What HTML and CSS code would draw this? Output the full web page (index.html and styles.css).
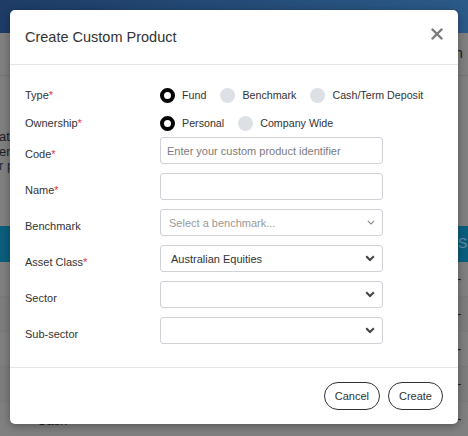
FILE: index.html
```html
<!DOCTYPE html>
<html>
<head>
<meta charset="utf-8">
<link rel="stylesheet" href="styles.css">
</head>
<body>
<div class="page">
  <div class="topbar"></div>
  <div class="tabs"><span class="tab-text">h</span></div>
  <div class="intro">
    <div class="intro-line">at</div>
    <div class="intro-line">en</div>
    <div class="intro-line link">r p</div>
  </div>
  <div class="table-head"><span class="th-text">S</span></div>
  <div class="trow"><span class="dash">-</span></div>
  <div class="trow alt"><span class="dash">-</span></div>
  <div class="trow"><span class="dash">-</span></div>
  <div class="trow alt"><span class="dash">-</span></div>
  <div class="trow"><span class="cash">Cash</span><span class="dash">-</span></div>
</div>

<div class="modal">
  <div class="modal-header">
    <h1 class="modal-title">Create Custom Product</h1>
    <span class="close" aria-label="Close">
      <svg width="12" height="12" viewBox="0 0 12 12"><path d="M1.5 1.5 L10.5 10.5 M10.5 1.5 L1.5 10.5" stroke="#7a7a7a" stroke-width="2.4" stroke-linecap="round"/></svg>
    </span>
  </div>
  <div class="modal-body">
    <div class="radio-row">
      <span class="label">Type<span class="req">*</span></span>
      <span class="radio checked"></span><span class="rtext">Fund</span>
      <span class="radio"></span><span class="rtext">Benchmark</span>
      <span class="radio"></span><span class="rtext">Cash/Term Deposit</span>
    </div>
    <div class="radio-row">
      <span class="label">Ownership<span class="req">*</span></span>
      <span class="radio checked"></span><span class="rtext">Personal</span>
      <span class="radio"></span><span class="rtext">Company Wide</span>
    </div>
    <div class="field-row first">
      <span class="label field-label">Code<span class="req">*</span></span>
      <div class="control"><span class="placeholder">Enter your custom product identifier</span></div>
    </div>
    <div class="field-row">
      <span class="label field-label">Name<span class="req">*</span></span>
      <div class="control"></div>
    </div>
    <div class="field-row">
      <span class="label field-label">Benchmark</span>
      <div class="control select"><span class="placeholder light">Select a benchmark...</span>
        <svg class="chev" width="8" height="5" viewBox="0 0 8 5"><path d="M0.8 0.8 L4 4 L7.2 0.8" fill="none" stroke="#8a8a8a" stroke-width="1.1"/></svg>
      </div>
    </div>
    <div class="field-row">
      <span class="label field-label">Asset Class<span class="req">*</span></span>
      <div class="control select"><span class="value">Australian Equities</span>
        <svg class="chev" width="10" height="7" viewBox="0 0 10 7"><path d="M1.2 1.2 L5 5 L8.8 1.2" fill="none" stroke="#444" stroke-width="2"/></svg>
      </div>
    </div>
    <div class="field-row">
      <span class="label field-label">Sector</span>
      <div class="control select">
        <svg class="chev" width="10" height="7" viewBox="0 0 10 7"><path d="M1.2 1.2 L5 5 L8.8 1.2" fill="none" stroke="#444" stroke-width="2"/></svg>
      </div>
    </div>
    <div class="field-row">
      <span class="label field-label">Sub-sector</span>
      <div class="control select">
        <svg class="chev" width="10" height="7" viewBox="0 0 10 7"><path d="M1.2 1.2 L5 5 L8.8 1.2" fill="none" stroke="#444" stroke-width="2"/></svg>
      </div>
    </div>
  </div>
  <div class="modal-footer">
    <button class="btn">Cancel</button>
    <button class="btn">Create</button>
  </div>
</div>
</body>
</html>
```

FILE: styles.css
```css
* { box-sizing: border-box; }
html, body { margin: 0; padding: 0; }
body {
  width: 468px;
  height: 436px;
  overflow: hidden;
  font-family: "Liberation Sans", Arial, sans-serif;
  background: #808080;
  position: relative;
}
.page { width: 468px; }
.topbar {
  height: 33px;
  background: linear-gradient(to right, #1e3c66, #2b5a88);
}
.tabs {
  height: 43px;
  border-bottom: 1px solid #747474;
  position: relative;
}
.tab-text {
  position: absolute;
  left: 455px;
  top: 12px;
  font-size: 14px;
  color: #1c1c1c;
}
.intro {
  padding-top: 54px;
  height: 150px;
  font-size: 13px;
  line-height: 14.5px;
  color: #1e1e1e;
}
.intro-line { margin-left: -1px; }
.intro-line.link { color: #1b2c44; }
.table-head {
  height: 36px;
  background: #0b5e7e;
  position: relative;
}
.th-text {
  position: absolute;
  left: 458px;
  top: 9px;
  font-size: 14px;
  color: #5e8ea4;
}
.trow {
  height: 35px;
  border-bottom: 1px solid #7a7a7a;
  position: relative;
  background: #808080;
}
.trow.alt { background: #7d7d7d; }
.dash {
  position: absolute;
  left: 457px;
  top: 9px;
  font-size: 13px;
  color: #1a1a1a;
}
.cash {
  position: absolute;
  left: 37px;
  top: 11px;
  font-size: 13px;
  color: #1a1a1a;
}

.modal {
  position: absolute;
  left: 10px;
  top: 10px;
  width: 448px;
  height: 414px;
  background: #fff;
  border-radius: 5px;
  box-shadow: 0 2px 8px rgba(0,0,0,0.35);
  color: #333;
}
.modal-header {
  height: 55px;
  border-bottom: 1px solid #e3e6ea;
  display: flex;
  align-items: center;
  justify-content: space-between;
  padding: 0 15px 0 15px;
}
.modal-title {
  margin: 0;
  font-size: 14.5px;
  font-weight: normal;
  color: #333;
}
.close {
  display: flex;
  margin-top: -6px;
}
.modal-body {
  padding: 16px 15px 23px 15px;
  font-size: 11px;
}
.label {
  width: 135px;
  flex: none;
  color: #333;
  font-size: 11px;
  white-space: nowrap;
}
.req { color: #e8323c; }
.radio-row {
  height: 28px;
  display: flex;
  align-items: center;
  white-space: nowrap;
}
.radio {
  width: 15px;
  height: 15px;
  border-radius: 50%;
  background: #dde0e5;
  flex: none;
}
.radio.checked {
  background: #fff;
  border: 4.5px solid #000;
}
.rtext {
  flex: none;
  margin-left: 7px;
  margin-right: 14px;
  color: #333;
  font-size: 10.7px;
}
.field-row {
  display: flex;
  align-items: flex-start;
  margin-top: 9px;
}
.field-row.first { margin-top: 0; }
.field-label {
  padding-top: 10px;
  line-height: 14px;
}
.control {
  width: 223px;
  height: 27px;
  border: 1px solid #cfd2d6;
  border-radius: 3px;
  display: flex;
  align-items: center;
  padding: 0 7px 0 6px;
  white-space: nowrap;
}
.select { justify-content: space-between; }
.placeholder { color: #7b7b7b; font-size: 11px; }
.placeholder.light { color: #9a9a9a; margin-left: 2px; }
.value { color: #333; margin-left: 4px; font-size: 11px; }
.select .chev { margin-left: auto; }
.modal-footer {
  border-top: 1px solid #e3e6ea;
  padding: 14px 15px 14px 15px;
  display: flex;
  justify-content: flex-end;
  gap: 8px;
}
.btn {
  height: 28px;
  padding: 0 10px;
  border: 1px solid #333;
  border-radius: 14px;
  background: #fff;
  font-family: "Liberation Sans", Arial, sans-serif;
  font-size: 11px;
  color: #333;
}
```
